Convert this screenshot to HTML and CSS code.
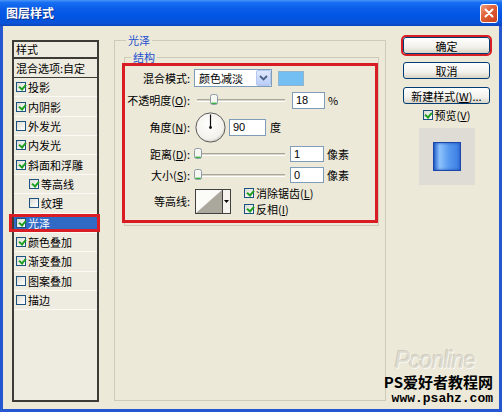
FILE: index.html
```html
<!DOCTYPE html>
<html>
<head>
<meta charset="utf-8">
<link rel="stylesheet" href="styles.css">
</head>
<body>
<div class="win">
  <div class="titlebar">
    <span class="title">图层样式</span>
    <span class="close"><svg width="10" height="10" viewBox="0 0 10 10"><path d="M1.5 1.5L8.5 8.5M8.5 1.5L1.5 8.5" stroke="#fff" stroke-width="2" stroke-linecap="round"/></svg></span>
  </div>
  <div class="main">
    <div class="styles">
      <div class="hdr">样式</div>
      <div class="blend">混合选项:自定</div>
      <div class="item"><i class="cb on"></i>投影</div>
      <div class="item"><i class="cb on"></i>内阴影</div>
      <div class="item"><i class="cb"></i>外发光</div>
      <div class="item"><i class="cb on"></i>内发光</div>
      <div class="item"><i class="cb on"></i>斜面和浮雕</div>
      <div class="item sub"><i class="cb on"></i>等高线</div>
      <div class="item sub"><i class="cb"></i>纹理</div>
      <div class="item sel"><i class="cb on"></i>光泽</div>
      <div class="item"><i class="cb on"></i>颜色叠加</div>
      <div class="item"><i class="cb on"></i>渐变叠加</div>
      <div class="item"><i class="cb"></i>图案叠加</div>
      <div class="item"><i class="cb"></i>描边</div>
    </div>

    <fieldset class="grp">
      <legend>光泽</legend>
      <fieldset class="subgrp">
        <legend>结构</legend>
        <div class="opts">
          <div class="row r1">
            <span class="lbl">混合模式:</span>
            <span class="sel-box"><span class="sel-text">颜色减淡</span><span class="arr"><svg width="9" height="6" viewBox="0 0 9 6"><path d="M1 1l3.5 3.5L8 1" stroke="#4d6185" stroke-width="1.8" fill="none"/></svg></span></span>
            <span class="swatch"></span>
          </div>
          <div class="row r2">
            <span class="lbl">不透明度(<u>O</u>):</span>
            <span class="slider"><span class="track"></span><span class="thumb t18"><svg width="8" height="11" viewBox="0 0 8 11"><rect x="0.5" y="0.5" width="7" height="10" rx="2" fill="#f7f7f2" stroke="#8c9aa6"/><path d="M1.2 9.3h5.6" stroke="#3fb14a" stroke-width="1.4"/></svg></span></span>
            <span class="inp w33">18</span>
            <span class="unit">%</span>
          </div>
          <div class="row r3">
            <span class="lbl">角度(<u>N</u>):</span>
            <span class="dial"><svg width="31" height="31" viewBox="0 0 31 31"><defs><radialGradient id="dg" cx="45%" cy="40%" r="65%"><stop offset="0" stop-color="#ffffff"/><stop offset="0.75" stop-color="#f3f2ec"/><stop offset="1" stop-color="#c6c3b7"/></radialGradient></defs><circle cx="15.5" cy="15.5" r="14.6" fill="url(#dg)" stroke="#5a5a5a" stroke-width="1"/><path d="M15.5 15.5V2.5" stroke="#111" stroke-width="1.2"/><circle cx="15.5" cy="15.5" r="1.4" fill="#111"/></svg></span>
            <span class="inp w37">90</span>
            <span class="unit u4">度</span>
          </div>
          <div class="row r4">
            <span class="lbl">距离(<u>D</u>):</span>
            <span class="slider"><span class="track"></span><span class="thumb t0"><svg width="8" height="11" viewBox="0 0 8 11"><rect x="0.5" y="0.5" width="7" height="10" rx="2" fill="#f7f7f2" stroke="#8c9aa6"/><path d="M1.2 9.3h5.6" stroke="#3fb14a" stroke-width="1.4"/></svg></span></span>
            <span class="inp w34">1</span>
            <span class="unit">像素</span>
          </div>
          <div class="row r5">
            <span class="lbl">大小(<u>S</u>):</span>
            <span class="slider"><span class="track"></span><span class="thumb t0"><svg width="8" height="11" viewBox="0 0 8 11"><rect x="0.5" y="0.5" width="7" height="10" rx="2" fill="#f7f7f2" stroke="#8c9aa6"/><path d="M1.2 9.3h5.6" stroke="#3fb14a" stroke-width="1.4"/></svg></span></span>
            <span class="inp w34">0</span>
            <span class="unit">像素</span>
          </div>
          <div class="row r6">
            <span class="lbl">等高线:</span>
            <span class="contour"><svg width="26" height="23" viewBox="0 0 26 23"><rect width="26" height="23" fill="#fbfbf8"/><path d="M0 23L26 0V23Z" fill="#aaa79d"/></svg><span class="cdrop"><svg width="5" height="3" viewBox="0 0 5 3"><path d="M0 0h5L2.5 3z" fill="#000"/></svg></span></span>
            <span class="checks">
              <span class="chk"><i class="cb on"></i>消除锯齿(<u>L</u>)</span>
              <span class="chk"><i class="cb on"></i>反相(<u>I</u>)</span>
            </span>
          </div>
        </div>
      </fieldset>
    </fieldset>

    <div class="side">
      <div class="btn ok">确定</div>
      <div class="btn">取消</div>
      <div class="btn">新建样式(<u>W</u>)...</div>
      <div class="pv"><i class="cb on"></i>预览(<u>V</u>)</div>
      <div class="preview"><div class="sq"></div></div>
    </div>

    <div class="logo">Pconline</div>
    <div class="wm">
      <div class="wm1">PS爱好者教程网</div>
      <div class="wm2">www.psahz.com</div>
    </div>
  </div>
</div>
</body>
</html>
```
FILE: styles.css
```css
* { box-sizing: border-box; }
html, body { margin: 0; padding: 0; }
body {
  width: 502px;
  height: 412px;
  overflow: hidden;
  background: #ece9d8;
  font-family: "Noto Sans CJK SC", "Noto Sans", sans-serif;
  font-size: 11px;
  line-height: 14px;
  color: #000;
}
u { text-decoration: underline; }
.win {
  width: 502px;
  height: 412px;
  display: flex;
  flex-direction: column;
}
.titlebar {
  height: 26px;
  flex: none;
  display: flex;
  align-items: center;
  padding: 0 4px 0 6px;
  background: linear-gradient(#4a95f7 0, #166ef2 10%, #0a5ce8 35%, #0055e3 65%, #0a52d6 90%, #0a43b8 100%);
}
.title {
  color: #fff;
  font-weight: bold;
  font-size: 12px;
  line-height: 14px;
  text-shadow: 1px 1px 0 #0b2f8a;
}
.close {
  margin-left: auto;
  width: 18px;
  height: 19px;
  border: 1px solid #fff;
  border-radius: 3px;
  background: linear-gradient(135deg, #ee9a7c 0, #df5f37 45%, #c9421c 100%);
  display: flex;
  align-items: center;
  justify-content: center;
}
.main {
  flex: 1;
  display: flex;
  align-items: flex-start;
  padding: 7px 9px 0;
  border: 3px solid #2457d0;
  border-top: 0;
  position: relative;
}

/* left list */
.styles {
  flex: none;
  width: 87px;
  height: 362px;
  margin-top: 7px;
  margin-right: 15px;
  border: 2px solid #3d3b36;
  background: #eeebe0;
}
.hdr {
  height: 17px;
  border-bottom: 2px solid #3d3b36;
  padding-left: 2px;
  line-height: 15px;
}
.blend {
  height: 19px;
  border-bottom: 1px solid #3d3b36;
  padding-left: 2px;
  display: flex;
  align-items: center;
  white-space: nowrap;
}
.item {
  height: 19.36px;
  border-bottom: 1px solid #fbfaf4;
  display: flex;
  align-items: center;
  padding-left: 2px;
  white-space: nowrap;
  position: relative;
}
.item.sub { padding-left: 15px; }
.item.sel {
  color: #fff;
  background: linear-gradient(#316ac5, #316ac5) center / 100% 14px no-repeat;
}
.item.sel::after {
  content: "";
  position: absolute;
  left: -5px;
  right: -3px;
  top: 0;
  bottom: 0;
  border: 3px solid #d91d25;
}

/* checkbox */
.cb {
  display: inline-block;
  flex: none;
  width: 10px;
  height: 10px;
  margin-right: 2px;
  border: 1px solid #1c5180;
  background: linear-gradient(135deg, #dcdcd4, #ffffff);
  position: relative;
}
.cb.on::after {
  content: "";
  position: absolute;
  left: 2.5px;
  top: 0;
  width: 3px;
  height: 5px;
  border: solid #21a121;
  border-width: 0 2px 2px 0;
  transform: rotate(40deg);
}

/* group boxes */
fieldset {
  margin: 0;
  padding: 0;
  border: 1px solid #cdcab8;
  min-width: 0;
}
legend {
  padding: 0 2px;
  line-height: 14px;
  font-size: 11px;
  color: #1d4fcf;
}
.grp {
  flex: none;
  width: 272px;
  height: 368px;
  margin-right: 17px;
}
.grp > legend { margin-left: 11px; }
.subgrp {
  width: 255px;
  margin: 3px 0 0 9px;
  padding: 0 3px 5px 0;
}
.subgrp > legend { margin-left: 6px; }

.opts {
  width: 250px;
  height: 154px;
  margin-top: 2px;
  outline: 3px solid #d91d25;
  display: flex;
  flex-direction: column;
}
.row {
  display: flex;
  align-items: center;
  flex: none;
  white-space: nowrap;
}
.r1 { height: 24px; }
.r2 { height: 20px; }
.r3 { height: 34px; }
.r4 { height: 20px; }
.r5 { height: 22px; }
.r6 { height: 30px; }
.lbl {
  width: 65px;
  margin-right: 4px;
  text-align: right;
  flex: none;
}
.sel-box {
  width: 78px;
  height: 18px;
  border: 1px solid #7f9db9;
  background: #fff;
  display: flex;
  align-items: center;
  flex: none;
}
.sel-text { padding-left: 4px; }
.arr {
  margin-left: auto;
  width: 15px;
  height: 16px;
  border-radius: 2px;
  background: linear-gradient(#dfe8fd, #b9cdf8);
  border: 1px solid #b4c7ee;
  display: flex;
  align-items: center;
  justify-content: center;
}
.swatch {
  width: 26px;
  height: 15px;
  margin-left: 6px;
  background: #73bff4;
  border: 1px solid #94b4cc;
  flex: none;
}
.slider {
  width: 94px;
  height: 14px;
  position: relative;
  flex: none;
}
.track {
  display: block;
  margin: 6px 3px 0;
  height: 3px;
  border-top: 1px solid #a9a69b;
  border-bottom: 1px solid #ffffff;
  background: #d9d6c8;
}
.thumb {
  position: absolute;
  top: 1px;
  line-height: 0;
}
.thumb.t18 { left: 16px; }
.thumb.t0 { left: 0; }
.inp {
  height: 17px;
  border: 1px solid #7f9db9;
  background: #fff;
  font-family: "Liberation Sans", Arial, sans-serif;
  font-size: 11px;
  padding-left: 3px;
  display: flex;
  align-items: center;
  flex: none;
}
.r2 .inp { margin-left: 4px; }
.r3 .inp { margin-left: 3px; }
.r4 .inp, .r5 .inp { margin-left: 2px; height: 16px; }
.w33 { width: 33px; }
.w37 { width: 37px; }
.w34 { width: 34px; }
.unit { margin-left: 3px; }
.unit.u4 { margin-left: 4px; }
.dial {
  margin-left: 1px;
  width: 31px;
  height: 31px;
  line-height: 0;
  flex: none;
}
.contour {
  margin-left: 1px;
  width: 36px;
  height: 25px;
  border: 1px solid #404040;
  display: flex;
  flex: none;
  line-height: 0;
}
.cdrop {
  width: 8px;
  border-left: 1px solid #404040;
  background: #f4f3ee;
  display: flex;
  align-items: center;
  justify-content: center;
}
.checks {
  margin-left: 13px;
  display: flex;
  flex-direction: column;
}
.chk {
  height: 16px;
  line-height: 16px;
  display: flex;
  align-items: center;
}

/* right column */
.side {
  flex: none;
  width: 87px;
  margin-top: 4px;
  display: flex;
  flex-direction: column;
  align-items: center;
}
.btn {
  width: 87px;
  height: 17px;
  margin-bottom: 8px;
  border: 1px solid #003c74;
  border-radius: 3px;
  background: linear-gradient(#ffffff, #f2f1ec 60%, #d9d4c6);
  display: flex;
  align-items: center;
  justify-content: center;
  white-space: nowrap;
}
.btn.ok {
  outline: 2px solid #d91d25;
}
.pv {
  margin-top: -4px;
  height: 14px;
  display: flex;
  align-items: center;
  white-space: nowrap;
}
.preview {
  margin-top: 6px;
  width: 56px;
  height: 57px;
  background: #dedcd5;
  display: flex;
  align-items: center;
  justify-content: center;
}
.sq {
  width: 28px;
  height: 29px;
  border: 1px solid #1a47a8;
  background: linear-gradient(90deg, #2e69d2 0, #8ec2fb 22%, #5a9bf0 55%, #3a7ae0 100%);
  box-shadow: inset 0 0 3px #1d4fb8;
}

/* watermark overlay */
.logo {
  position: absolute;
  right: 24px;
  top: 322px;
  font-family: "Liberation Sans", Arial, sans-serif;
  font-size: 23px;
  line-height: 24px;
  font-style: italic;
  letter-spacing: -1px;
  color: #dedbcf;
  text-shadow: 1px 1px 0 #f8f7f2, -1px -1px 0 #cfccbf;
}
.wm {
  position: absolute;
  right: 6px;
  top: 347px;
  font-weight: bold;
  color: #000;
  text-align: right;
}
.wm1 {
  font-size: 15px;
  line-height: 17px;
  white-space: nowrap;
}
.wm2 {
  margin-top: 2px;
  font-family: "Liberation Mono", monospace;
  font-size: 13px;
  line-height: 14px;
}
```
